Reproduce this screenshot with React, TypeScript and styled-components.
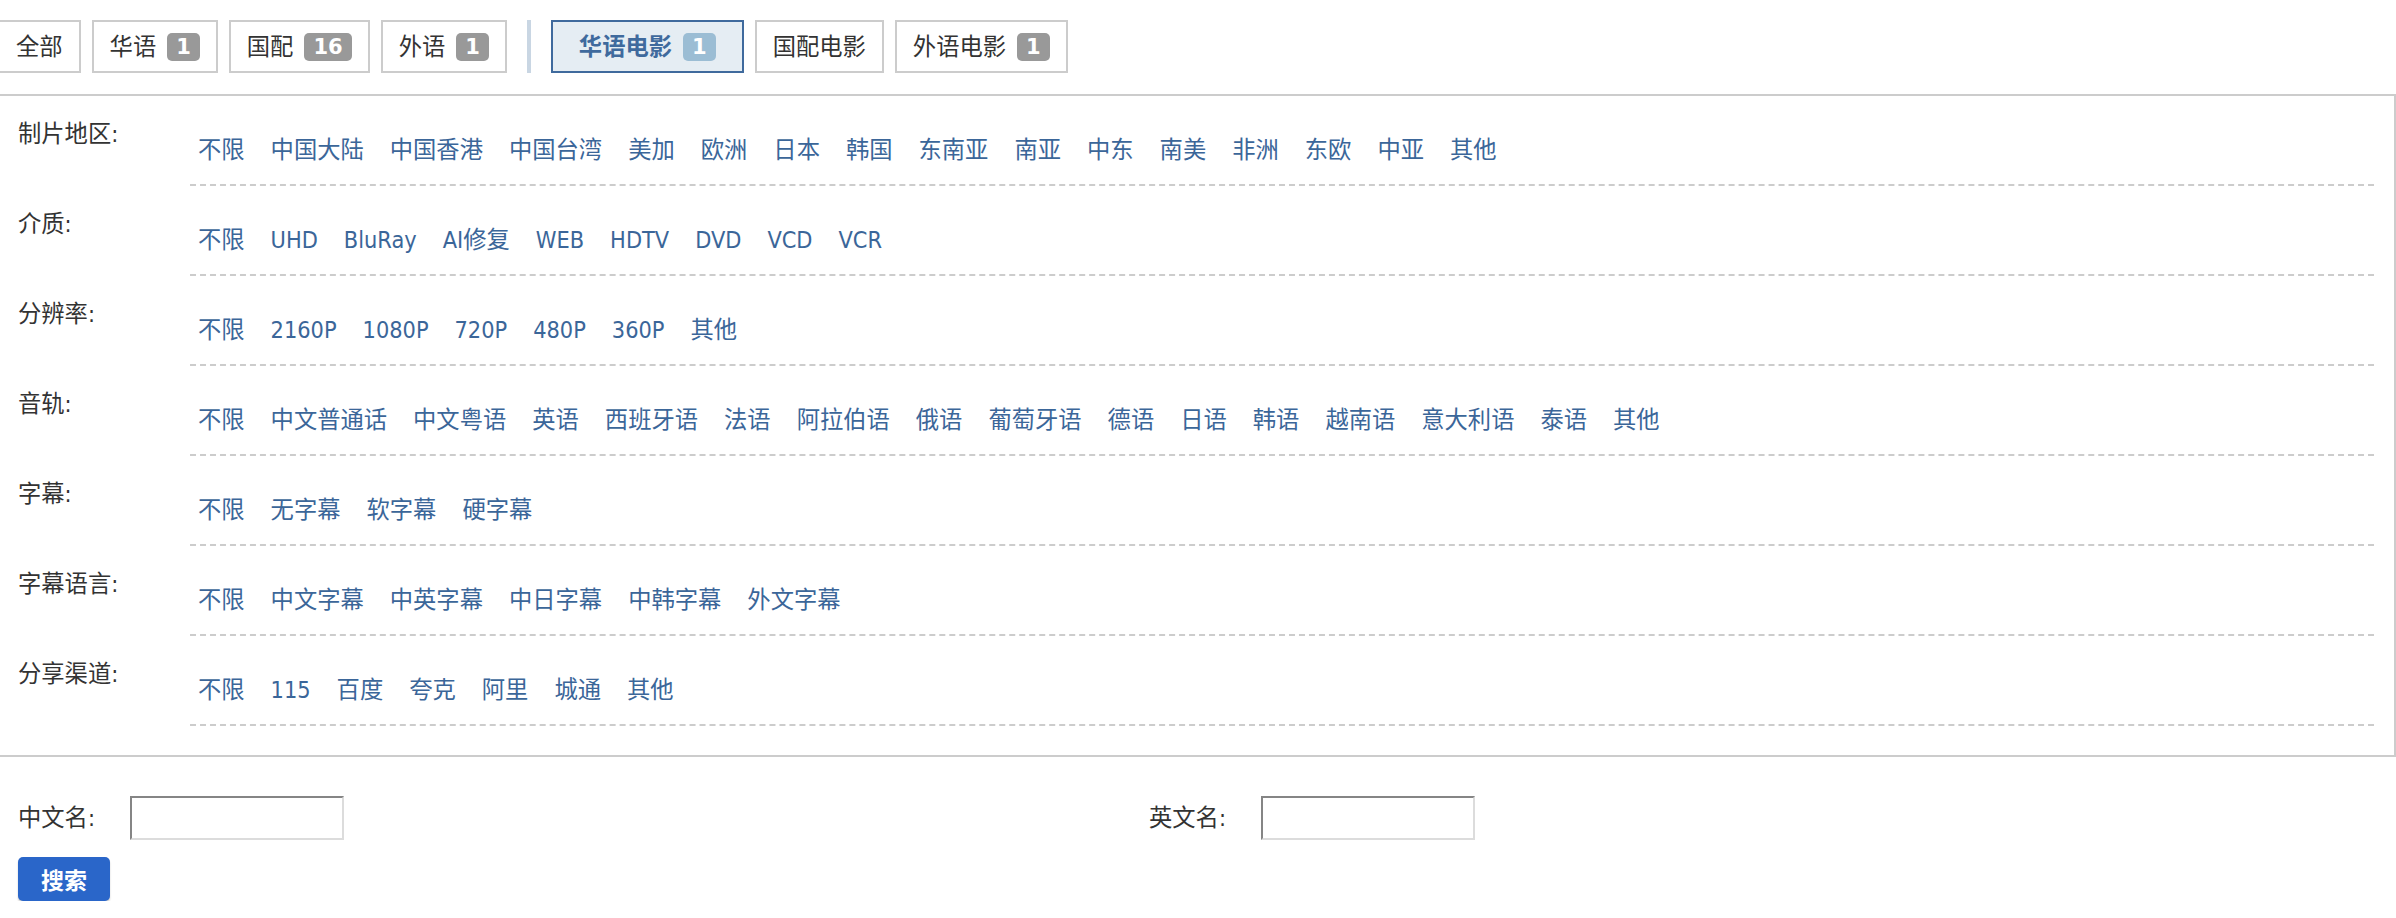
import styled, { createGlobalStyle } from 'styled-components';

interface TAB {
  name: string;
  count?: number;
  active?: boolean;
}

interface FILTER {
  label: string;
  options: string[];
}

const GlobalStyle = createGlobalStyle`
  body {
    margin: 0;
    background: #fff;
    font-family: "DejaVu Sans Condensed", "Noto Sans CJK SC", sans-serif;
    font-size: 23.3px;
    color: #333;
  }
`;

const Page = styled.div`
  margin-left: -2px;
  padding-top: 20px;
`;

const TabBar = styled.div`
  display: flex;
  align-items: stretch;
  gap: 11px;
`;

const Tab = styled.div<{ $active?: boolean }>`
  box-sizing: border-box;
  height: 53px;
  display: inline-flex;
  align-items: center;
  gap: 11px;
  padding: 0 ${({ $active }) => ($active ? '26px' : '16px')};
  border: 2px solid ${({ $active }) => ($active ? '#3f6a9d' : '#cccccc')};
  background: ${({ $active }) => ($active ? '#e5edf3' : '#fff')};
  color: ${({ $active }) => ($active ? '#3f6a9d' : '#333')};
  font-weight: ${({ $active }) => ($active ? 'bold' : 'normal')};
  line-height: 30px;
  white-space: nowrap;
`;

const Badge = styled.span<{ $active?: boolean }>`
  display: inline-flex;
  align-items: center;
  height: 28px;
  padding: 0 9px;
  border-radius: 5px;
  background: ${({ $active }) => ($active ? '#9bbdd4' : '#999999')};
  color: #fff;
  font-family: "DejaVu Sans", sans-serif;
  font-weight: bold;
  font-size: 21px;
`;

const Divider = styled.div`
  width: 4px;
  margin: 0 9px;
  background: #c9d6e3;
`;

const Panel = styled.div`
  margin-top: 21px;
  border: 2px solid #cccccc;
  padding: 0 20px 29px 18px;
`;

const FilterRow = styled.div`
  display: flex;
  margin-top: 23px;
`;

const FilterLabel = styled.div`
  width: 172px;
  flex-shrink: 0;
  line-height: 30px;
  color: #333;
`;

const OptionList = styled.div`
  flex: 1;
  display: flex;
  flex-wrap: wrap;
  column-gap: 26px;
  padding: 16px 8px 19px;
  border-bottom: 2px dashed #cccccc;
  line-height: 30px;
`;

const Option = styled.a`
  color: #3b6699;
  text-decoration: none;
  cursor: pointer;
`;

const SearchForm = styled.div`
  padding: 39px 0 0 20px;
`;

const FieldRow = styled.div`
  display: grid;
  grid-template-columns: 112px 1019px 112px 1fr;
  align-items: center;
`;

const FieldLabel = styled.label`
  color: #333;
  line-height: 30px;
`;

const TextInput = styled.input`
  box-sizing: border-box;
  width: 214px;
  height: 44px;
  border-style: solid;
  border-width: 2px;
  border-color: #858585 #dcdcdc #dcdcdc #858585;
  background: #fff;
  outline: none;
`;

const SearchButton = styled.button`
  margin-top: 17px;
  width: 92px;
  height: 44px;
  border: none;
  border-radius: 5px;
  background: #2a66c9;
  color: #fff;
  font-family: "Noto Sans CJK SC", sans-serif;
  font-size: 23px;
  font-weight: bold;
  box-shadow: 0 2px 2px rgba(0, 0, 0, 0.2);
  cursor: pointer;
`;

const leftTabs: TAB[] = [
  { name: '全部' },
  { name: '华语', count: 1 },
  { name: '国配', count: 16 },
  { name: '外语', count: 1 },
];

const rightTabs: TAB[] = [
  { name: '华语电影', count: 1, active: true },
  { name: '国配电影' },
  { name: '外语电影', count: 1 },
];

const filters: FILTER[] = [
  { label: '制片地区', options: ['不限', '中国大陆', '中国香港', '中国台湾', '美加', '欧洲', '日本', '韩国', '东南亚', '南亚', '中东', '南美', '非洲', '东欧', '中亚', '其他'] },
  { label: '介质', options: ['不限', 'UHD', 'BluRay', 'AI修复', 'WEB', 'HDTV', 'DVD', 'VCD', 'VCR'] },
  { label: '分辨率', options: ['不限', '2160P', '1080P', '720P', '480P', '360P', '其他'] },
  { label: '音轨', options: ['不限', '中文普通话', '中文粤语', '英语', '西班牙语', '法语', '阿拉伯语', '俄语', '葡萄牙语', '德语', '日语', '韩语', '越南语', '意大利语', '泰语', '其他'] },
  { label: '字幕', options: ['不限', '无字幕', '软字幕', '硬字幕'] },
  { label: '字幕语言', options: ['不限', '中文字幕', '中英字幕', '中日字幕', '中韩字幕', '外文字幕'] },
  { label: '分享渠道', options: ['不限', '115', '百度', '夸克', '阿里', '城通', '其他'] },
];

const renderTab = (tab: TAB) => (
  <Tab key={tab.name} $active={tab.active}>
    {tab.name}
    {tab.count !== undefined && <Badge $active={tab.active}>{tab.count}</Badge>}
  </Tab>
);

const App = () => {
  return (
    <Page>
      <GlobalStyle />
      <TabBar>
        {leftTabs.map(renderTab)}
        <Divider />
        {rightTabs.map(renderTab)}
      </TabBar>
      <Panel>
        {filters.map((filter) => (
          <FilterRow key={filter.label}>
            <FilterLabel>{filter.label}:</FilterLabel>
            <OptionList>
              {filter.options.map((option) => (
                <Option key={option}>{option}</Option>
              ))}
            </OptionList>
          </FilterRow>
        ))}
      </Panel>
      <SearchForm>
        <FieldRow>
          <FieldLabel>中文名:</FieldLabel>
          <div><TextInput type="text" /></div>
          <FieldLabel>英文名:</FieldLabel>
          <div><TextInput type="text" /></div>
        </FieldRow>
        <SearchButton>搜索</SearchButton>
      </SearchForm>
    </Page>
  );
};

export default App;
